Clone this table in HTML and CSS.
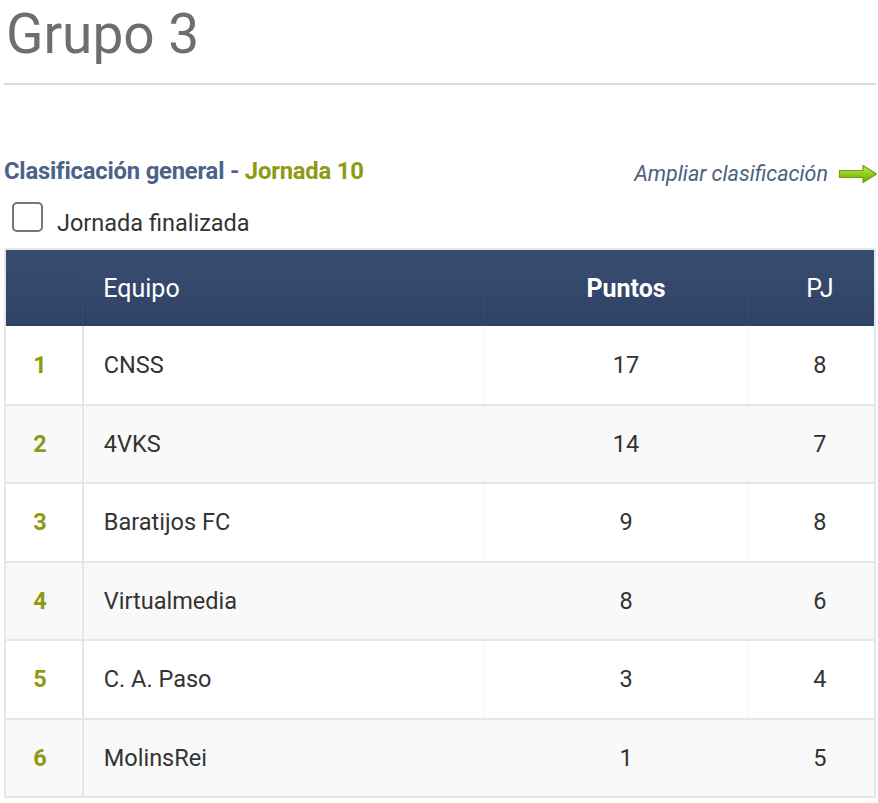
FILE: index.html
```html
<!DOCTYPE html>
<html lang="es">
<head>
<meta charset="utf-8">
<title>Grupo 3</title>
<link rel="stylesheet" href="styles.css">
</head>
<body>
<div class="page">
  <h1 class="title">Grupo 3</h1>
  <hr class="rule">
  <div class="bar">
    <h2 class="subtitle">Clasificación general - <span class="jornada">Jornada 10</span></h2>
    <a class="more" href="#">Ampliar clasificación
      <svg class="arrow" width="40" height="20" viewBox="0 0 40 20">
        <defs>
          <linearGradient id="g" x1="0" y1="0" x2="0" y2="1">
            <stop offset="0" stop-color="#c8ec5a"/>
            <stop offset="0.5" stop-color="#8fcc1c"/>
            <stop offset="1" stop-color="#6aa80e"/>
          </linearGradient>
        </defs>
        <path d="M1.5 6.5 H25 V1.5 L38.5 10 L25 18.5 V13.5 H1.5 Z" fill="url(#g)" stroke="#6f9d1a" stroke-width="1.2" stroke-linejoin="round"/>
      </svg>
    </a>
  </div>
  <label class="check"><span class="box"></span>Jornada finalizada</label>
  <table class="standings">
    <thead>
      <tr>
        <th class="c-pos"></th>
        <th class="c-team">Equipo</th>
        <th class="c-pts strong">Puntos</th>
        <th class="c-pj">PJ</th>
      </tr>
    </thead>
    <tbody>
      <tr><td class="c-pos">1</td><td class="c-team">CNSS</td><td class="c-pts">17</td><td class="c-pj">8</td></tr>
      <tr><td class="c-pos">2</td><td class="c-team">4VKS</td><td class="c-pts">14</td><td class="c-pj">7</td></tr>
      <tr><td class="c-pos">3</td><td class="c-team">Baratijos FC</td><td class="c-pts">9</td><td class="c-pj">8</td></tr>
      <tr><td class="c-pos">4</td><td class="c-team">Virtualmedia</td><td class="c-pts">8</td><td class="c-pj">6</td></tr>
      <tr><td class="c-pos">5</td><td class="c-team">C. A. Paso</td><td class="c-pts">3</td><td class="c-pj">4</td></tr>
      <tr><td class="c-pos">6</td><td class="c-team">MolinsRei</td><td class="c-pts">1</td><td class="c-pj">5</td></tr>
    </tbody>
  </table>
</div>
</body>
</html>
```

FILE: styles.css
```css
* { box-sizing: border-box; }
html, body { margin: 0; padding: 0; background: #fff; }
body { font-family: Roboto, "Noto Sans", "Liberation Sans", sans-serif; color: #333; }
.page { padding: 0 2px 0 4px; width: 878px; }

.title {
  margin: 0;
  padding: 0 0 0 2px;
  font-weight: 400;
  font-size: 55px;
  line-height: 68px;
  color: #6e6e6e;
}
.rule {
  margin: 15px 0 0 0;
  border: 0;
  border-top: 2px solid #dcdcdc;
  height: 0;
}

.bar {
  display: flex;
  justify-content: space-between;
  align-items: center;
  margin-top: 69px;
  height: 34px;
}
.subtitle {
  margin: 0;
  font-size: 23.8px;
  font-weight: 700;
  color: #4b6289;
  letter-spacing: -0.2px;
}
.jornada { color: #8e9a14; }
.more {
  display: flex;
  align-items: center;
  gap: 10px;
  font-size: 21.5px;
  font-style: italic;
  color: #4c6082;
  text-decoration: none;
  margin-top: 5px;
}
.arrow { display: block; margin-right: -2px; }

.check {
  display: flex;
  align-items: center;
  gap: 14px;
  margin-top: 13px;
  height: 44px;
  padding-left: 8px;
  font-size: 23.5px;
  color: #333;
}
.box {
  width: 31px;
  height: 30px;
  border: 2px solid #777;
  border-radius: 5px;
  margin-top: -12px;
}

.standings {
  margin-top: 3px;
  width: 872px;
  border-collapse: collapse;
  border: 2px solid #e6e6e6;
  font-size: 23.5px;
}
.standings th, .standings td {
  height: 78.5px;
  padding: 0;
  border-top: 0;
  border-bottom: 2px solid #e6e6e6;
  border-left: 1px solid #f5f5f5;
  border-right: 1px solid #f5f5f5;
  vertical-align: middle;
}
.standings th {
  height: 77px;
  border-left: 1px solid #384c6f;
  border-right: 1px solid #384c6f;
  border-bottom: 0;
  color: #fff;
  font-size: 25px;
  font-weight: 400;
  background: linear-gradient(180deg, #394d71 0%, #34486b 50%, #2f4264 100%);
}
.standings th.strong { font-weight: 700; }
.standings th.c-pos { border-left: 2px solid #e6e6e6; }
.standings th.c-pj { border-right: 2px solid #e6e6e6; }
.standings tbody td.c-pos { border-left: 2px solid #e6e6e6; border-right: 2px solid #e6e6e6; }
.standings tbody td.c-pj { border-right: 2px solid #e6e6e6; }
.standings tbody tr:nth-child(even) td { background: #f9f9f9; }

.c-pos { width: 78px; text-align: center; padding-right: 8px !important; }
td.c-pos { color: #8e9a14; font-weight: 700; }
.c-team { width: 403px; text-align: left; padding-left: 20px !important; }
.c-pts { width: 263px; text-align: center; padding-left: 20px !important; }
.c-pj { width: 128px; text-align: center; padding-left: 18px !important; }
```
